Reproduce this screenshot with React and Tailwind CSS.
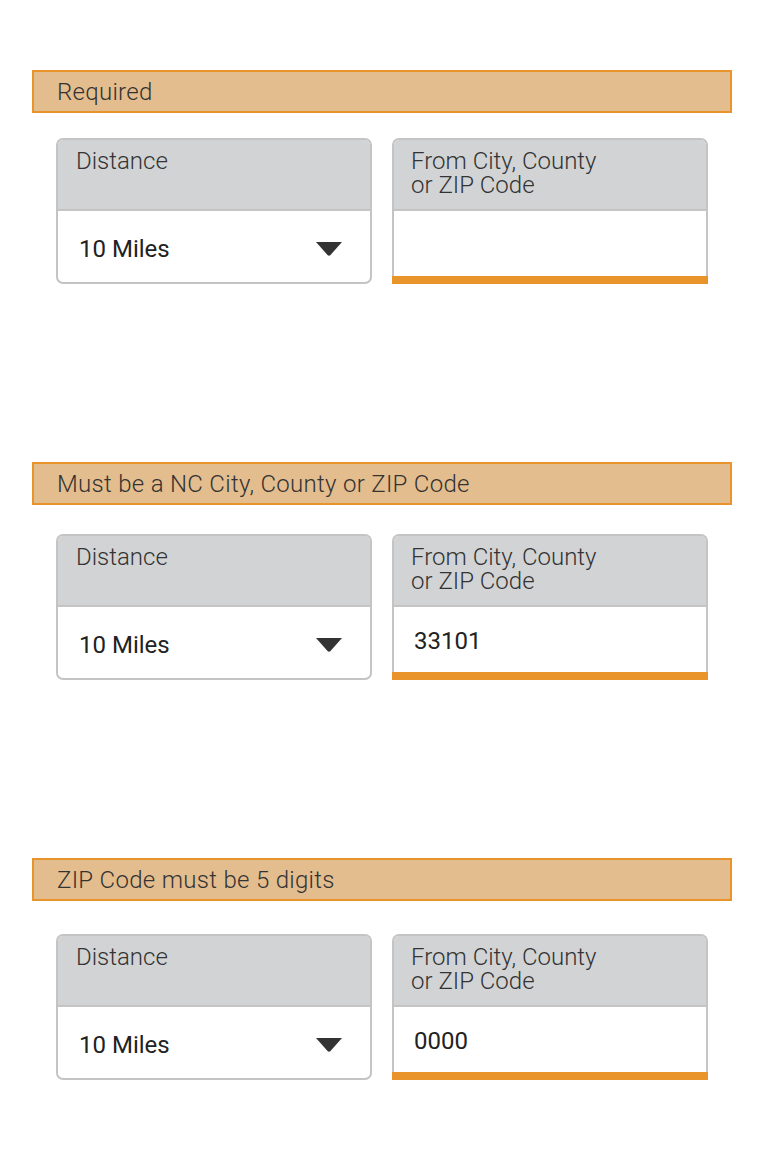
import React from "react";

function Caret() {
  return (
    <svg width="26" height="14" viewBox="0 0 26 14" className="block">
      <path d="M0 0 H26 L14.5 13 Q13 14.5 11.5 13 Z" fill="#333333" />
    </svg>
  );
}

function Section({ message, value, mtBanner, mtBox }) {
  return (
    <div className={mtBanner}>
      <div className="ml-[32px] w-[700px] h-[43px] border-2 border-[#e9942a] bg-[#e3bd8e] flex items-center pl-[23px] text-[24px] leading-[28px] tracking-[0.3px] font-light text-[#333333]">
        {message}
      </div>
      <div className={`${mtBox} ml-[56px] flex gap-[20px]`}>
        <div className="w-[316px] h-[146px] border-2 border-[#c4c4c4] rounded-[7px] overflow-hidden flex flex-col bg-white">
          <div className="h-[71px] shrink-0 bg-[#d2d3d5] border-b-2 border-[#c4c4c4] pl-[18px] pt-[9px] text-[24px] leading-[24px] font-light text-[#333333]">
            Distance
          </div>
          <div className="flex-1 flex items-center justify-between pl-[21px] pr-[28px] pt-[4px] text-[24px] leading-[28px] text-[#222222]">
            <span>10 Miles</span>
            <Caret />
          </div>
        </div>
        <div className="w-[316px] h-[146px] flex flex-col">
          <div className="flex-1 border-2 border-b-0 border-[#c4c4c4] rounded-t-[7px] overflow-hidden flex flex-col bg-white">
            <div className="h-[71px] shrink-0 bg-[#d2d3d5] border-b-2 border-[#c4c4c4] pl-[17px] pt-[9px] text-[24px] leading-[24px] font-light text-[#333333]">
              From City, County
              <br />
              or ZIP Code
            </div>
            <div className="flex-1 flex items-center pl-[20px] pt-[3px] text-[24px] leading-[28px] text-[#222222]">
              {value}
            </div>
          </div>
          <div className="h-[8px] bg-[#e9942a]" />
        </div>
      </div>
    </div>
  );
}

export default function App() {
  return (
    <div className="w-[778px] min-h-[1158px] bg-white" style={{ fontFamily: "Roboto, 'Liberation Sans', sans-serif" }}>
      <div className="pt-[70px]">
        <Section message="Required" value="" mtBanner="mt-0" mtBox="mt-[25px]" />
        <Section message="Must be a NC City, County or ZIP Code" value="33101" mtBanner="mt-[178px]" mtBox="mt-[29px]" />
        <Section message="ZIP Code must be 5 digits" value="0000" mtBanner="mt-[178px]" mtBox="mt-[33px]" />
      </div>
    </div>
  );
}
